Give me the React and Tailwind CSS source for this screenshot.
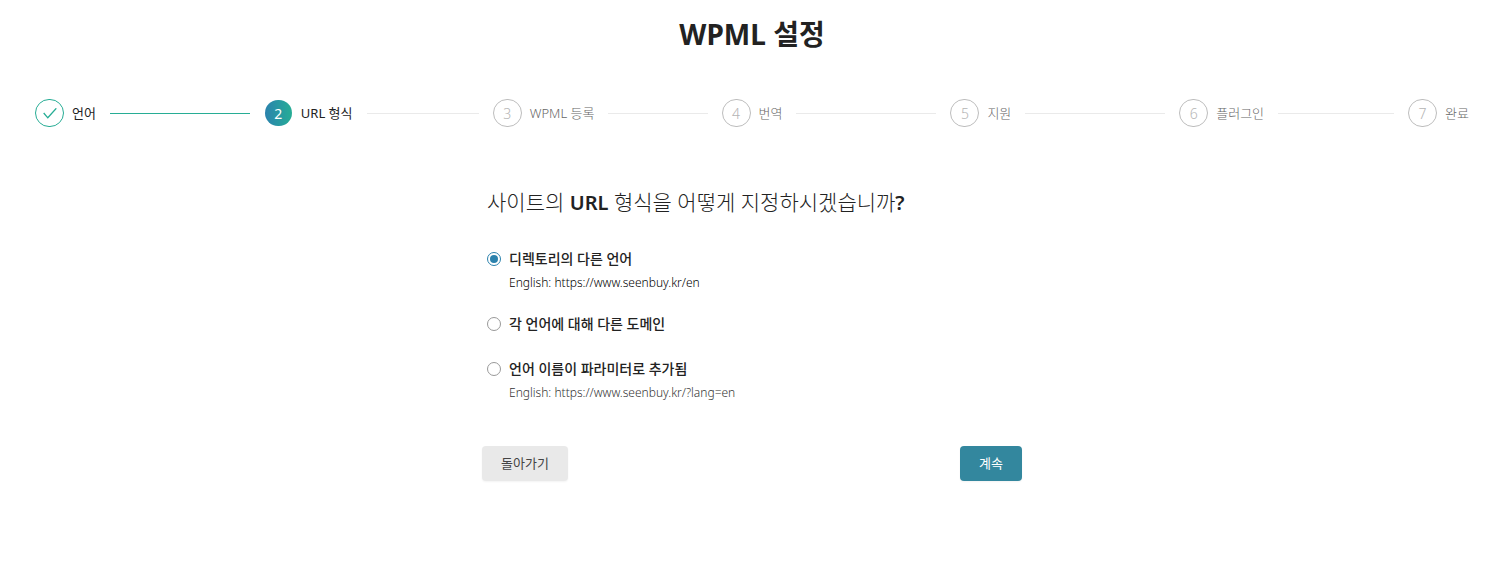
import { clsx } from 'clsx'
import { useState } from 'react'

const steps = ['언어', 'URL 형식', 'WPML 등록', '번역', '지원', '플러그인', '완료']
const current = 1

const options = [
  {
    id: 'directory',
    label: '디렉토리의 다른 언어',
    example: 'English: https://www.seenbuy.kr/en',
  },
  { id: 'domain', label: '각 언어에 대해 다른 도메인' },
  {
    id: 'parameter',
    label: '언어 이름이 파라미터로 추가됨',
    example: 'English: https://www.seenbuy.kr/?lang=en',
  },
]

function Step({ label, index }) {
  const done = index < current
  const active = index === current
  const last = index === steps.length - 1

  return (
    <li
      aria-current={active ? 'step' : undefined}
      className={clsx('flex items-center', !last && 'min-w-0 flex-1')}
    >
      <span
        className={clsx(
          'flex h-7 w-[29px] shrink-0 items-center justify-center rounded-full border pt-px text-sm',
          done && 'border-[#27ad95] text-[#27ad95]',
          active &&
            'border-transparent bg-linear-to-r from-[#2b82ad] to-[#27ad95] bg-clip-padding text-white',
          !done && !active && 'border-[#bdbdbd] font-light text-[#b4b4b4]',
        )}
      >
        {done ? (
          <svg width="14" height="12" viewBox="0 0 14 12" fill="none" aria-hidden="true">
            <path d="M0.7 5L4.8 9.8L13.3 0.3" stroke="currentColor" strokeWidth="1.3" />
          </svg>
        ) : (
          index + 1
        )}
      </span>
      <span
        className={clsx(
          'ml-2 shrink-0 pt-px text-[13px]',
          done || active ? 'text-[#222]' : 'font-light text-[#666]',
        )}
      >
        {label}
      </span>
      {!last && (
        <span className={clsx('mx-3.5 h-px flex-1', done ? 'bg-[#27ad95]' : 'bg-[#eaeaea]')} />
      )}
    </li>
  )
}

function App() {
  const [format, setFormat] = useState('directory')

  return (
    <main className="min-h-screen bg-white pt-4 pr-9 pb-12 pl-[35px] font-['Noto_Sans','Noto_Sans_CJK_KR',sans-serif] text-[#222]">
      <h1 className="text-center text-[28px] leading-9 font-bold">WPML 설정</h1>

      <ol className="mt-[47px] flex">
        {steps.map((label, index) => (
          <Step key={label} label={label} index={index} />
        ))}
      </ol>

      <form
        className="mx-auto mt-[59px] max-w-[540px]"
        onSubmit={(event) => event.preventDefault()}
      >
        <fieldset className="px-[5px]">
          <legend className="text-[21px] leading-8 font-light">
            사이트의 <span className="text-xl font-semibold">URL</span> 형식을 어떻게
            지정하시겠습니까<span className="text-xl font-semibold">?</span>
          </legend>
          <div className="mt-[29px] flex flex-col gap-[21px]">
            {options.map((option) => (
              <div key={option.id} className="flex items-start gap-2">
                <input
                  type="radio"
                  id={option.id}
                  name="format"
                  checked={format === option.id}
                  onChange={() => setFormat(option.id)}
                  className="mt-[5px] grid size-3.5 shrink-0 appearance-none place-items-center rounded-full border border-[#999] bg-white checked:border-[#2b82ad] checked:before:size-2 checked:before:rounded-full checked:before:bg-[#2b82ad]"
                />
                <label htmlFor={option.id} className="text-sm leading-6">
                  <span className="block font-medium">{option.label}</span>
                  {option.example && (
                    <span
                      className={clsx(
                        '-mb-1 block text-xs leading-6 font-light',
                        format === option.id ? 'text-black' : 'text-[#333]',
                      )}
                    >
                      {option.example}
                    </span>
                  )}
                </label>
              </div>
            ))}
          </div>
        </fieldset>

        <div className="mt-[45px] flex justify-between">
          <button
            type="button"
            className="h-[35px] rounded bg-[#e9e9e9] px-[19px] text-[13px] text-[#444] shadow-xs"
          >
            돌아가기
          </button>
          <button
            type="submit"
            className="h-[35px] rounded bg-[#33879e] px-[19px] text-[13px] text-white shadow-xs"
          >
            계속
          </button>
        </div>
      </form>
    </main>
  )
}

export default App
